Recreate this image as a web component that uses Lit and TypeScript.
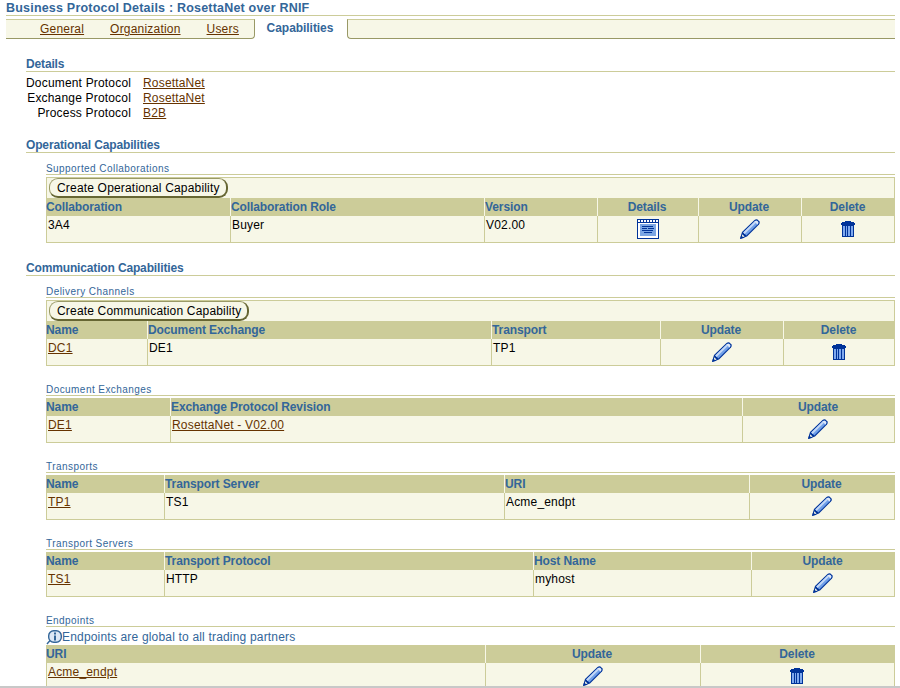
import { LitElement, html, css, svg } from "lit";
import { customElement } from "lit/decorators.js";

const pencil = html`<svg class="ico" width="22" height="22" viewBox="0 0 22 22">
  <path d="M1 21 L3 14 L15.5 2 Q17 0.8 18.5 1.5 L20.5 3.5 Q21.3 5 20 6.5 L8 18.5 Z" fill="#003399"/>
  <path d="M4.2 14.6 L16 3 Q17 2.2 18 2.8 L19.3 4.1 Q20 5 19 6 L7.4 17.6 Z" fill="#6f9fe8"/>
  <path d="M4.2 14.6 L15.5 3.4 L17 4.8 L5.6 16 Z" fill="#c4d8f6"/>
  <path d="M16 3 L18 2.8 L19.3 4.1 L19 6 L18.4 6.6 L15.4 3.6 Z" fill="#dfe9f9"/>
  <path d="M1 21 L2.3 16.4 L5.6 19.7 Z" fill="#003399"/>
  <path d="M3.2 16.2 L5.6 18.4 L4 19 L3 18.2 Z" fill="#f7f7e7"/>
</svg>`;

const trash = html`<svg class="ico" width="14" height="16" viewBox="0 0 14 16" shape-rendering="crispEdges">
  <rect x="4" y="0" width="6" height="1" fill="#003399"/>
  <rect x="1" y="1" width="12" height="1" fill="#003399"/>
  <rect x="0" y="2" width="14" height="2" fill="#003399"/>
  <rect x="1" y="4" width="12" height="12" fill="#003399"/>
  <rect x="2" y="5" width="2" height="10" fill="#7fa9ee"/>
  <rect x="5" y="5" width="1" height="10" fill="#7fa9ee"/>
  <rect x="7" y="5" width="2" height="10" fill="#7fa9ee"/>
  <rect x="10" y="5" width="2" height="10" fill="#7fa9ee"/>
</svg>`;

const details = html`<svg class="ico" width="22" height="20" viewBox="0 0 22 20" shape-rendering="crispEdges">
  <rect width="22" height="20" fill="#003399"/>
  <rect x="1" y="4" width="20" height="15" fill="#ffffff"/>
  ${[1, 4, 7, 10, 13, 16, 19].map((x) => svg`<rect x="${x}" y="1" width="2" height="2" fill="#ffffff"/>`)}
  <rect x="3" y="5" width="16" height="12" fill="#7ba6e4"/>
  <rect x="5" y="7" width="11" height="1" fill="#003399"/>
  <rect x="5" y="9" width="5" height="1" fill="#003399"/>
  <rect x="11" y="9" width="6" height="1" fill="#003399"/>
  <rect x="5" y="11" width="11" height="1" fill="#003399"/>
  <rect x="7" y="13" width="8" height="1" fill="#003399"/>
</svg>`;

const info = html`<svg class="info" width="16" height="16" viewBox="0 0 16 16">
  <path d="M1 15 L4 11.5" stroke="#336699" stroke-width="1.4" fill="none"/>
  <rect x="2.7" y="1.7" width="12.6" height="11.6" rx="5" fill="#dce8f6" stroke="#336699" stroke-width="1.4"/>
  <rect x="8" y="3.5" width="2" height="2" fill="#336699"/>
  <rect x="8" y="6.5" width="2" height="5" fill="#336699"/>
</svg>`;

type Cell = string | { link: string } | { icon: "pencil" | "trash" | "details" };
type Table = {
  title: string;
  button?: string;
  note?: string;
  cols: number[];
  heads: [string, boolean][];
  row: Cell[];
};

const P = { icon: "pencil" as const };
const T = { icon: "trash" as const };
const D = { icon: "details" as const };
const widths = (edges: number[]) => edges.slice(1).map((e, i) => e - edges[i]);

const opTable: Table = {
  title: "Supported Collaborations",
  button: "Create Operational Capability",
  cols: widths([46, 230, 484, 597, 698, 801, 895]),
  heads: [["Collaboration", false], ["Collaboration Role", false], ["Version", false], ["Details", true], ["Update", true], ["Delete", true]],
  row: ["3A4", "Buyer", "V02.00", D, P, T],
};

const commTables: Table[] = [
  {
    title: "Delivery Channels",
    button: "Create Communication Capability",
    cols: widths([46, 147, 491, 660, 783, 895]),
    heads: [["Name", false], ["Document Exchange", false], ["Transport", false], ["Update", true], ["Delete", true]],
    row: [{ link: "DC1" }, "DE1", "TP1", P, T],
  },
  {
    title: "Document Exchanges",
    cols: widths([46, 170, 742, 895]),
    heads: [["Name", false], ["Exchange Protocol Revision", false], ["Update", true]],
    row: [{ link: "DE1" }, { link: "RosettaNet - V02.00" }, P],
  },
  {
    title: "Transports",
    cols: widths([46, 164, 504, 749, 895]),
    heads: [["Name", false], ["Transport Server", false], ["URI", false], ["Update", true]],
    row: [{ link: "TP1" }, "TS1", "Acme_endpt", P],
  },
  {
    title: "Transport Servers",
    cols: widths([46, 164, 533, 751, 895]),
    heads: [["Name", false], ["Transport Protocol", false], ["Host Name", false], ["Update", true]],
    row: [{ link: "TS1" }, "HTTP", "myhost", P],
  },
  {
    title: "Endpoints",
    note: "Endpoints are global to all trading partners",
    cols: widths([46, 485, 700, 895]),
    heads: [["URI", false], ["Update", true], ["Delete", true]],
    row: [{ link: "Acme_endpt" }, P, T],
  },
];

@customElement("app-root")
export class AppRoot extends LitElement {
  static styles = css`
    :host {
      display: block;
      position: relative;
      height: 688px;
      overflow: hidden;
      background: #fff;
      font: 12px "Liberation Sans", Arial, sans-serif;
      letter-spacing: 0.18px;
      color: #000;
    }
    a { color: #663300; text-decoration: underline; }
    .page { padding: 0 5px 0 6px; }
    .title {
      height: 15px;
      line-height: 16px;
      font-size: 12.5px;
      font-weight: bold;
      letter-spacing: 0.2px;
      color: #336699;
      border-bottom: 1px solid #cccc99;
      white-space: nowrap;
    }
    .tabs { display: flex; height: 20px; margin-top: 3px; line-height: 19px; }
    .tabs .left, .tabs .right {
      background: #f7f7e7;
      border-top: 1px solid #cccc99;
      border-bottom: 1px solid #999966;
      box-sizing: border-box;
    }
    .tabs .left {
      width: 249px;
      display: flex;
      gap: 26px;
      padding-left: 34px;
      letter-spacing: 0.2px;
      border-right: 1px solid #999966;
      border-bottom-right-radius: 4px;
    }
    .tabs .active {
      width: 92px;
      box-sizing: border-box;
      padding-right: 2px;
      text-align: center;
      font-weight: bold;
      color: #336699;
      letter-spacing: -0.05px;
    }
    .tabs .right { flex: 1; border-left: 1px solid #999966; border-bottom-left-radius: 4px; }
    .body { padding-left: 20px; }
    h2 {
      margin: 17px 0 0;
      height: 15px;
      line-height: 16px;
      font-size: 12px;
      font-weight: bold;
      letter-spacing: -0.15px;
      color: #336699;
      border-bottom: 1px solid #cccc99;
    }
    .props {
      display: grid;
      grid-template-columns: 105px auto;
      justify-content: start;
      column-gap: 12px;
      margin-top: 4px;
      line-height: 15px;
      white-space: nowrap;
    }
    .props + h2 { margin-top: 16px; }
    .props .k { text-align: right; }
    .sub { padding-left: 20px; }
    .sub h3 {
      margin: 16px 0 2px;
      height: 13px;
      line-height: 15px;
      font-size: 10px;
      font-weight: normal;
      letter-spacing: 0.44px;
      color: #336699;
      border-bottom: 1px solid #cccc99;
    }
    .sub.first h3 { margin-top: 8px; }
    .note { display: flex; align-items: center; height: 16px; color: #336699; }
    .toolbar {
      height: 21px;
      box-sizing: border-box;
      padding: 0 0 0 2px;
      background: #f7f7e7;
      border: 1px solid #cccc99;
      border-bottom: 0;
    }
    button {
      display: block;
      height: 20px;
      box-sizing: border-box;
      padding: 1px 6px 0 7px;
      border: 1px solid;
      border-width: 1px 2px 2px 1px;
      border-color: #999966 #666633 #666633 #999966;
      border-radius: 9px;
      background: #f7f7e7;
      font: inherit;
      letter-spacing: inherit;
      color: #000;
      line-height: 15px;
    }
    .grid { display: grid; }
    .th {
      height: 18px;
      line-height: 18px;
      background: #cccc99;
      color: #336699;
      font-weight: bold;
      letter-spacing: -0.1px;
      white-space: nowrap;
      box-sizing: border-box;
      border-left: 1px solid #f7f7e7;
    }
    .th.c { text-align: center; padding-right: 2px; }
    .th:first-child { border-left: 0; }
    .td {
      height: 27px;
      box-sizing: border-box;
      background: #f7f7e7;
      border-left: 1px solid #cccc99;
      border-bottom: 1px solid #cccc99;
      padding: 2px 0 0 1px;
      line-height: 15px;
      white-space: nowrap;
    }
    .td:last-child { border-right: 1px solid #cccc99; }
    .td.i { display: flex; justify-content: center; align-items: center; padding: 0 1px 1px 0; }
    .ico, .info { display: block; flex: none; }
    .edge { position: absolute; left: 0; right: 0; bottom: 0; height: 2px; background: #c8c8c8; }
  `;

  private cell(c: Cell) {
    if (typeof c === "string") return html`<div class="td">${c}</div>`;
    if ("link" in c) return html`<div class="td"><a href="#">${c.link}</a></div>`;
    const g = c.icon === "pencil" ? pencil : c.icon === "trash" ? trash : details;
    return html`<div class="td i">${g}</div>`;
  }

  private table(t: Table, first: boolean) {
    return html`<section class="sub ${first ? "first" : ""}">
      <h3>${t.title}</h3>
      ${t.note ? html`<div class="note">${info}${t.note}</div>` : ""}
      ${t.button ? html`<div class="toolbar"><button>${t.button}</button></div>` : ""}
      <div class="grid" style="grid-template-columns:${t.cols.map((w) => w + "px").join(" ")}">
        ${t.heads.map(([h, c]) => html`<div class="th ${c ? "c" : ""}">${h}</div>`)}
        ${t.row.map((c) => this.cell(c))}
      </div>
    </section>`;
  }

  render() {
    return html`<div class="page">
        <div class="title">Business Protocol Details : RosettaNet over RNIF</div>
        <nav class="tabs">
          <div class="left"><a href="#">General</a><a href="#">Organization</a><a href="#">Users</a></div>
          <div class="active">Capabilities</div>
          <div class="right"></div>
        </nav>
        <div class="body">
          <h2>Details</h2>
          <div class="props">
            <div class="k">Document Protocol</div><a href="#">RosettaNet</a>
            <div class="k">Exchange Protocol</div><a href="#">RosettaNet</a>
            <div class="k">Process Protocol</div><a href="#">B2B</a>
          </div>
          <h2>Operational Capabilities</h2>
          ${this.table(opTable, true)}
          <h2>Communication Capabilities</h2>
          ${commTables.map((t, i) => this.table(t, i === 0))}
        </div>
      </div>
      <div class="edge"></div>`;
  }
}
